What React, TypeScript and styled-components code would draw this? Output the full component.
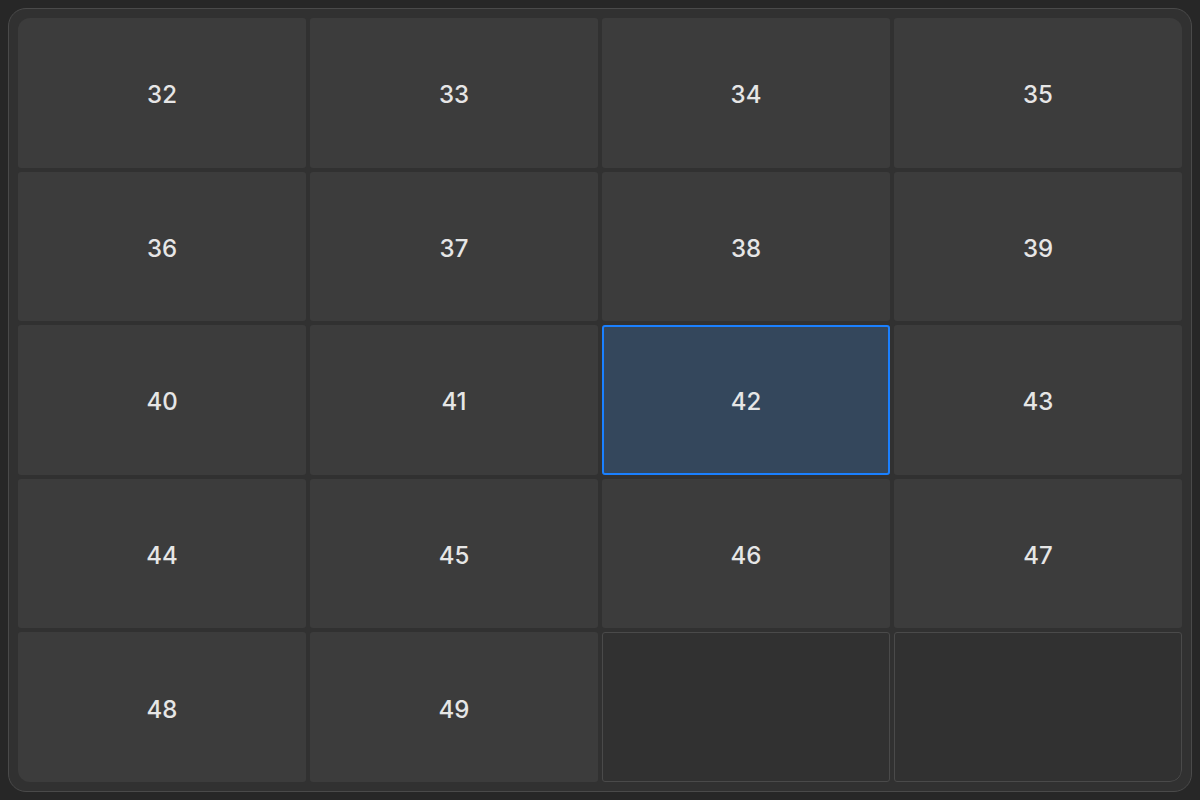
import React from "react";
import styled, { createGlobalStyle } from "styled-components";

const Global = createGlobalStyle`
  html, body { margin: 0; padding: 0; background: #272727; }
  body { font-family: Inter, "Noto Sans", sans-serif; }
  #root { width: 1200px; height: 800px; }
`;

const Page = styled.div`
  box-sizing: border-box;
  width: 1200px;
  height: 800px;
  padding: 8px;
  background: #272727;
`;

const Panel = styled.div`
  box-sizing: border-box;
  height: 100%;
  border: 1px solid #4a4a4a;
  border-radius: 18px;
  background: #313131;
  padding: 9px;
`;

const Grid = styled.div`
  height: 100%;
  display: grid;
  grid-template-columns: repeat(4, 1fr);
  grid-template-rows: repeat(5, 1fr);
  gap: 4px;
  border-radius: 12px;
  overflow: hidden;
`;

const Cell = styled.div<{ $selected?: boolean; $empty?: boolean }>`
  box-sizing: border-box;
  display: flex;
  align-items: center;
  justify-content: center;
  padding-top: 4px;
  border-radius: 3px;
  font-size: 24px;
  font-weight: 500;
  color: #e6e6e6;
  background: ${(p) => (p.$selected ? "#34475c" : p.$empty ? "#313131" : "#3c3c3c")};
  border: ${(p) =>
    p.$selected ? "2px solid #1a80ff" : p.$empty ? "1.5px solid #4a4a4a" : "none"};
`;

const EmptyCornerCell = styled(Cell)`
  border-bottom-right-radius: 12px;
`;

export default function App() {
  const nums = Array.from({ length: 18 }, (_, i) => 32 + i);
  return (
    <>
      <Global />
      <Page>
        <Panel>
          <Grid>
            {nums.map((n) => (
              <Cell key={n} $selected={n === 42}>
                {n}
              </Cell>
            ))}
            <Cell $empty />
            <EmptyCornerCell $empty />
          </Grid>
        </Panel>
      </Page>
    </>
  );
}
